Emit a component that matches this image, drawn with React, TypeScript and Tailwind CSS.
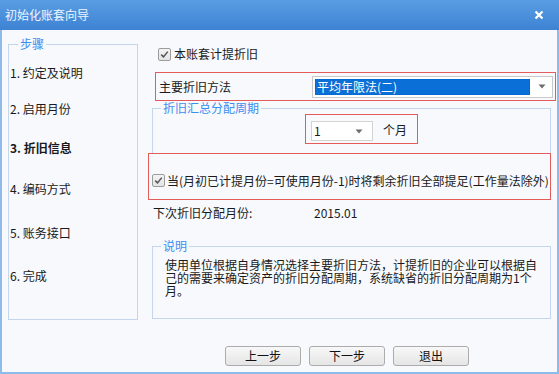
import React from 'react'

const font = "font-['Noto_Sans_CJK_SC',sans-serif]"

function Check({ checked = true }: { checked?: boolean }) {
  return (
    <span className="flex h-[13px] w-[13px] shrink-0 items-center justify-center rounded-[2px] border border-[#9c9c9c] bg-linear-to-b from-[#f4f4f4] to-[#e4e4e4]">
      {checked && (
        <svg width="9" height="9" viewBox="0 0 9 9">
          <path d="M1.2 4.6 L3.5 6.9 L7.8 1.6" fill="none" stroke="#555" strokeWidth="1.5" />
        </svg>
      )}
    </span>
  )
}

function Arrow() {
  return (
    <svg width="8" height="5" viewBox="0 0 8 5" className="shrink-0">
      <path d="M0.5 0.5 H7.5 L4 4.5 Z" fill="#6d6d6d" />
    </svg>
  )
}

function WizButton({ label }: { label: string }) {
  return (
    <button
      type="button"
      className="flex h-[20px] w-[76px] items-center justify-center rounded-[3px] border border-[#acacac] bg-linear-to-b from-[#f8f8f8] to-[#e5e5e5] text-[12px] leading-[14px] text-[#111]"
    >
      {label}
    </button>
  )
}

export default function App() {
  return (
    <div className={`flex h-[374px] w-[559px] flex-col overflow-hidden text-[#1a1a1a] ${font}`}>
      {/* title bar */}
      <div className="flex h-[30px] shrink-0 items-center justify-between bg-linear-to-b from-[#5a9de3] to-[#3d83d3] pl-[5px] pr-[15px]">
        <span className="text-[12px] leading-[14px] text-[#eef5ff]">初始化账套向导</span>
        <svg width="10" height="10" viewBox="0 0 10 10">
          <path d="M1.5 1.5 L8.5 8.5 M8.5 1.5 L1.5 8.5" stroke="#fff" strokeWidth="2.2" />
        </svg>
      </div>

      {/* body */}
      <div className="flex flex-1 flex-col border-x-2 border-b-2 border-[#8fbbea] bg-[#f7f9fd]">
        <div className="flex">
          {/* steps */}
          <fieldset className="ml-[6px] mt-[7px] h-[283px] w-[130px] border border-[#c4d6ec] p-0">
            <legend className="ml-[9px] px-[2px] text-[12px] leading-[14px] text-[#3e8ef0]">步骤</legend>
            <div className="flex flex-col pl-[1px] text-[12px] leading-[14px]">
              <span className="mt-[15px]">1. 约定及说明</span>
              <span className="mt-[22px]">2. 启用月份</span>
              <span className="mt-[25px] font-bold">3. 折旧信息</span>
              <span className="mt-[27px]">4. 编码方式</span>
              <span className="mt-[30px]">5. 账务接口</span>
              <span className="mt-[29px]">6. 完成</span>
            </div>
          </fieldset>

          {/* right side */}
          <div className="ml-[10px] flex w-[408px] flex-col text-[12px] leading-[14px]">
            <div className="ml-[10px] mt-[17px] flex items-center gap-[3px]">
              <Check />
              <span>本账套计提折旧</span>
            </div>

            <div className="ml-[7px] mt-[11px] flex h-[29px] w-[401px] items-center justify-between border border-[#e45b5b] pl-[3px] pr-[2px]">
              <span>主要折旧方法</span>
              <div className="flex h-[22px] w-[241px] items-center border border-[#c9c9c9] bg-white pl-[2px] pr-[6px]">
                <span className="flex h-[16px] flex-1 items-center border border-dotted border-[#6b4d1f] bg-[#0a6fd6] pl-px text-white">
                  平均年限法(二)
                </span>
                <span className="ml-[8px]">
                  <Arrow />
                </span>
              </div>
            </div>

            <fieldset className="ml-[4px] h-[53px] w-[399px] border border-[#c4d6ec] p-0">
              <legend className="ml-[8px] px-[2px] text-[#3e8ef0]">折旧汇总分配周期</legend>
              <div className="-mt-px ml-[152px] flex h-[30px] w-[113px] items-start gap-[10px] border border-[#e45b5b] pl-[5px] pt-[6px]">
                <div className="flex h-[20px] w-[62px] items-center justify-between border border-[#d3d3d3] bg-white pl-[2px] pr-[9px]">
                  <span>1</span>
                  <Arrow />
                </div>
                <span className="mt-[2px]">个月</span>
              </div>
            </fieldset>

            <div className="-mt-px flex h-[47px] w-[403px] items-start gap-[2px] border border-[#e45b5b] pl-[3px] pt-[20px]">
              <Check />
              <span className="whitespace-nowrap">当(月初已计提月份=可使用月份-1)时将剩余折旧全部提足(工作量法除外)</span>
            </div>

            <div className="ml-[5px] mt-[6px] flex">
              <span className="w-[161px]">下次折旧分配月份:</span>
              <span>2015.01</span>
            </div>

            <fieldset className="ml-[4px] mt-[19px] h-[80px] w-[399px] border border-[#c4d6ec] p-0">
              <legend className="ml-[8px] px-[2px] text-[#3e8ef0]">说明</legend>
              <div className="ml-[12px] mt-[5px] flex w-[375px] flex-col leading-[13px]">
                <span className="whitespace-nowrap">使用单位根据自身情况选择主要折旧方法，计提折旧的企业可以根据自</span>
                <span className="whitespace-nowrap">己的需要来确定资产的折旧分配周期，系统缺省的折旧分配周期为1个</span>
                <span>月。</span>
              </div>
            </fieldset>
          </div>
        </div>

        <div className="ml-[223px] mt-[26px] flex gap-[8px]">
          <WizButton label="上一步" />
          <WizButton label="下一步" />
          <WizButton label="退出" />
        </div>
      </div>
    </div>
  )
}
